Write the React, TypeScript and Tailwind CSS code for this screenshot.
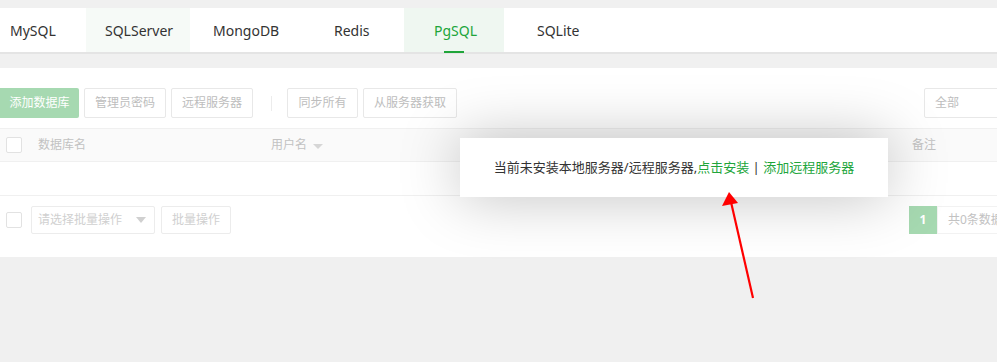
import React from "react";

const TABS = [
  { label: "MySQL", w: "w-[86px]", pl: "pl-[10px]" },
  { label: "SQLServer", w: "w-[104px]", pl: "pl-[19px]", hover: true },
  { label: "MongoDB", w: "w-[110px]", pl: "pl-[23px]" },
  { label: "Redis", w: "w-[104px]", pl: "pl-[34px]" },
  { label: "PgSQL", w: "w-[100px]", pl: "pl-[30px]", active: true },
  { label: "SQLite", w: "w-[104px]", pl: "pl-[33px]" },
];

const TOOL_BUTTONS = [
  { label: "管理员密码", w: "w-[82px]" },
  { label: "远程服务器", w: "w-[82px]" },
];
const SYNC_BUTTONS = [
  { label: "同步所有", w: "w-[71px]" },
  { label: "从服务器获取", w: "w-[94px]" },
];

function Checkbox() {
  return <span className="block h-[16px] w-[16px] rounded-[2px] border border-[#e2e2e2] bg-white" />;
}

function GhostButton({ label, w }: { label: string; w: string }) {
  return (
    <button
      type="button"
      className={`h-[30px] rounded-[2px] border border-[#e8e8e8] bg-white text-center text-[12px] text-[#bdbdbd] ${w}`}
    >
      {label}
    </button>
  );
}

export default function App() {
  return (
    <div className="relative h-[362px] w-[997px] overflow-hidden bg-[#f0f0f0] font-['Noto_Sans','Noto_Sans_CJK_SC',sans-serif]">
      <div className="w-[1100px] pt-[8px]">
        {/* database type tabs */}
        <div className="flex h-[44px] bg-white shadow-[0_2px_0_#e4e4e4]">
          {TABS.map((t) => (
            <div
              key={t.label}
              className={`relative flex h-full items-center text-[14px] ${t.w} ${t.pl} ${
                t.active
                  ? "bg-[#eff7f1] text-[#20a53a]"
                  : t.hover
                    ? "bg-[#f6faf7] text-[#333]"
                    : "text-[#333]"
              }`}
            >
              {t.label}
              {t.active ? (
                <span className="absolute bottom-[-1px] left-[40px] h-[2px] w-[20px] bg-[#20a53a]" />
              ) : null}
            </div>
          ))}
        </div>

        {/* main panel */}
        <div className="mt-[16px] h-[189px] bg-white">
          <div className="flex items-center pt-[20px]">
            <button
              type="button"
              className="h-[30px] w-[79px] rounded-r-[2px] bg-[#a6d9b1] text-[12px] text-white"
            >
              添加数据库
            </button>
            <div className="ml-[5px] flex gap-[5px]">
              {TOOL_BUTTONS.map((b) => (
                <GhostButton key={b.label} label={b.label} w={b.w} />
              ))}
            </div>
            <span className="ml-[18px] mr-[15px] h-[15px] w-px bg-[#ececec]" />
            <div className="flex gap-[5px]">
              {SYNC_BUTTONS.map((b) => (
                <GhostButton key={b.label} label={b.label} w={b.w} />
              ))}
            </div>
            <div className="ml-[467px] flex h-[30px] w-[150px] items-center rounded-[2px] border border-[#e8e8e8] pl-[10px] text-[12px] text-[#bdbdbd]">
              全部
            </div>
          </div>

          {/* table */}
          <div className="mt-[10px] text-[12px] text-[#c2c2c2]">
            <div className="flex h-[34px] items-center border-y border-[#f0f0f0] bg-[#fafafa]">
              <div className="w-[28px] pl-[6px]">
                <Checkbox />
              </div>
              <div className="w-[233px] pl-[10px]">数据库名</div>
              <div className="flex w-[641px] items-center pl-[10px]">
                用户名
                <span className="ml-[6px] mt-[2px] h-0 w-0 border-x-[5px] border-t-[5px] border-x-transparent border-t-[#d6d6d6]" />
              </div>
              <div className="pl-[10px]">备注</div>
            </div>
            <div className="h-[34px] border-b border-[#f0f0f0]" />
            <div className="flex items-center pt-[10px]">
              <div className="w-[31px] pl-[6px]">
                <Checkbox />
              </div>
              <div className="flex h-[28px] w-[124px] items-center justify-between rounded-[2px] border border-[#ececec] pl-[6px] pr-[8px] text-[#d0d0d0]">
                请选择批量操作
                <span className="h-0 w-0 border-x-[5px] border-t-[6px] border-x-transparent border-t-[#d0d0d0]" />
              </div>
              <div className="ml-[6px] flex h-[28px] w-[70px] items-center justify-center rounded-[2px] border border-[#ececec] text-[#d0d0d0]">
                批量操作
              </div>
              <div className="ml-[678px] flex h-[28px]">
                <span className="flex w-[28px] items-center justify-center bg-[#a6d9b1] font-bold text-white">1</span>
                <span className="flex w-[120px] items-center border border-[#f2f2f2] pl-[10px] text-[#c2c2c2]">
                  共0条数据
                </span>
              </div>
            </div>
          </div>
        </div>
      </div>

      {/* install prompt */}
      <div className="absolute left-[460px] top-[138px] flex h-[59px] w-[428px] items-center justify-center bg-white text-[13px] text-[#333] shadow-[0_0_60px_rgba(0,0,0,0.25)]">
        <span>
          当前未安装本地服务器/远程服务器,<span className="text-[#20a53a]">点击安装</span> |{" "}
          <span className="text-[#20a53a]">添加远程服务器</span>
        </span>
      </div>

      {/* annotation arrow */}
      <svg className="absolute left-0 top-0" width="997" height="362" viewBox="0 0 997 362">
        <line x1="753" y1="298" x2="731" y2="202" stroke="#ff0000" strokeWidth="2.2" />
        <polygon points="729,192 722,206 738,203" fill="#ff0000" />
      </svg>
    </div>
  );
}
